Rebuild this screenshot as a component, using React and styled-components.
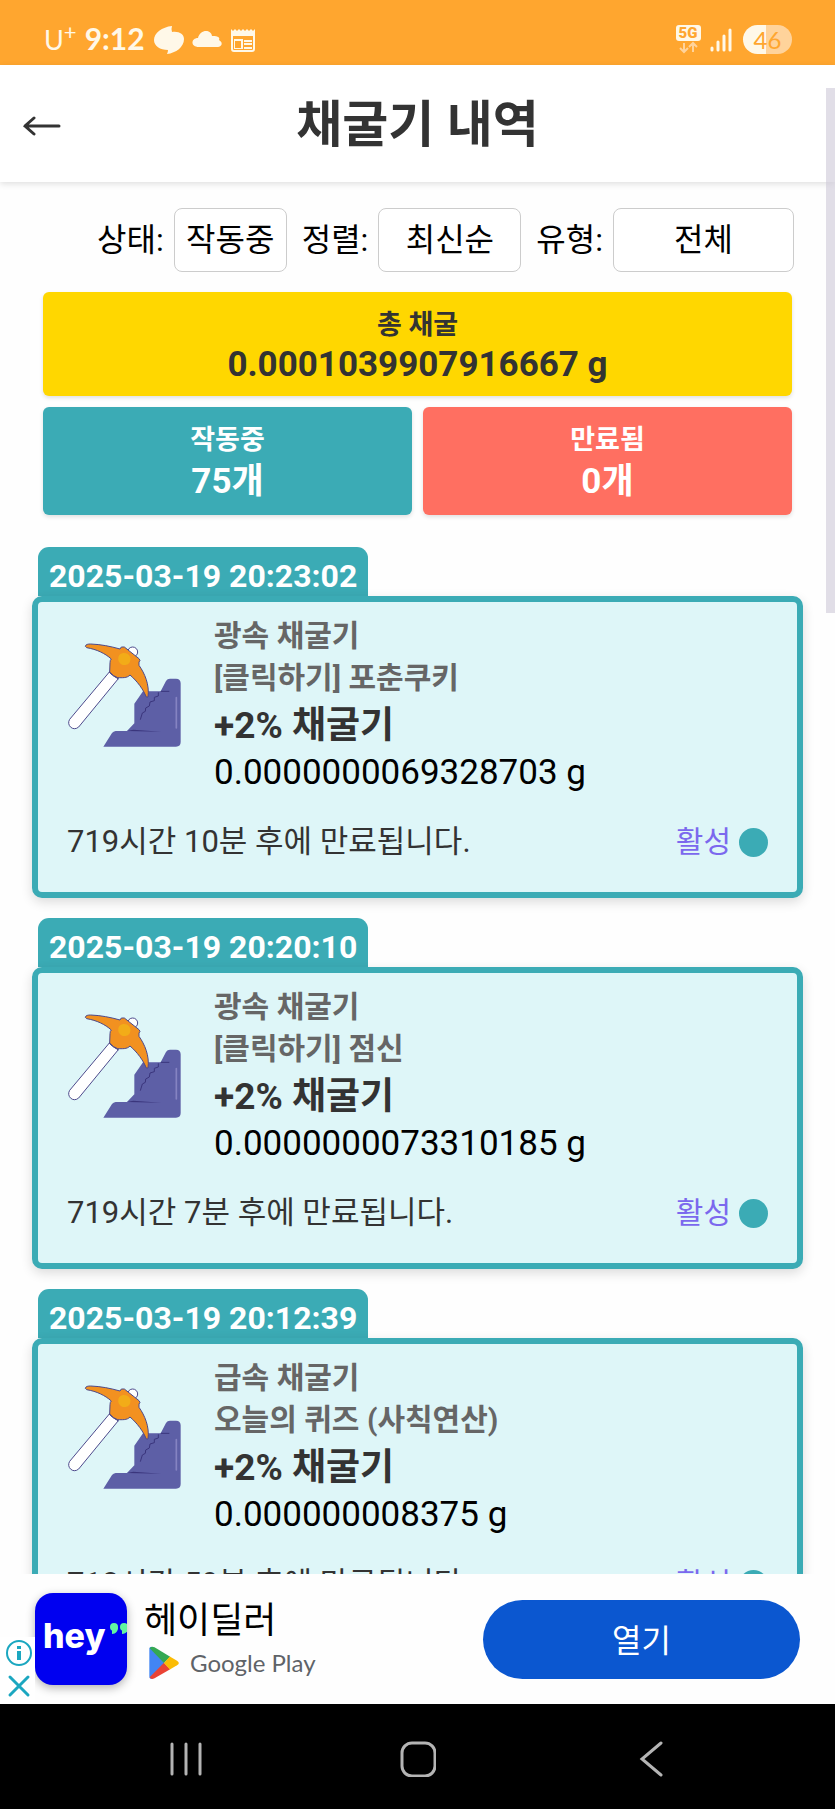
import React, {useState} from 'react';
import styled, {createGlobalStyle} from 'styled-components';

const GlobalStyle = createGlobalStyle`
    * {
        box-sizing: border-box;
    }

    body {
        margin: 0;
        background-color: #fefefe;
        color: #000;
        font-family: Roboto, 'Noto Sans CJK KR', sans-serif;
    }

    button,
    select {
        font-family: inherit;
    }
`;

const StyledScreen = styled.div`
    display: flex;
    flex-direction: column;
    height: 100vh;
`;

const StyledStatusBar = styled.div`
    display: flex;
    flex-shrink: 0;
    justify-content: space-between;
    align-items: center;
    height: 65px;
    padding: 14px 43px 0 44px;
    background-color: #ffa62f;
    color: #fff8e8;
    font-family: Lato, sans-serif;
`;

const StyledStatusGroup = styled.div`
    display: flex;
    align-items: center;
    gap: ${({$gap}) => $gap}px;
`;

const StyledCarrier = styled.span`
    display: flex;
    font-size: 27px;
    line-height: 28px;
`;

const StyledCarrierPlus = styled.sup`
    font-size: 22px;
    line-height: 12px;
`;

const StyledClock = styled.span`
    padding-bottom: 3px;
    font-size: 30px;
    font-weight: 700;
    line-height: 28px;
`;

const StyledBattery = styled.span`
    width: 49px;
    border-radius: 15px;
    background: linear-gradient(to right, #fff8e8 46%, #ffd39b 46%);
    color: #ffa62f;
    font-size: 24px;
    line-height: 29px;
    text-align: center;
`;

const StyledViewport = styled.div`
    position: relative;
    display: flex;
    flex: 1;
    flex-direction: column;
    min-height: 0;
`;

const StyledScrollThumb = styled.div`
    position: absolute;
    top: 23px;
    right: 0;
    z-index: 2;
    width: 9px;
    height: 525px;
    background-color: rgba(205, 200, 215, 0.6);
`;

const StyledHeader = styled.header`
    z-index: 1;
    display: grid;
    flex-shrink: 0;
    grid-template-columns: 40px 1fr 40px;
    align-items: center;
    height: 117px;
    padding: 2px 22px 0;
    background-color: #fff;
    box-shadow: 0 2px 6px rgba(0, 0, 0, 0.12);
`;

const StyledBackButton = styled.button`
    display: flex;
    padding: 2px 0 0;
    border: none;
    background: none;
    cursor: pointer;
`;

const StyledTitle = styled.h1`
    margin: 0;
    color: #333;
    font-size: 50px;
    font-weight: 700;
    line-height: 60px;
    text-align: center;
`;

const StyledMain = styled.main`
    flex: 1;
    min-height: 0;
    overflow-y: auto;
    scrollbar-width: none;
`;

const StyledFilters = styled.div`
    display: flex;
    justify-content: flex-end;
    gap: 15px;
    padding: 26px 41px 20px;
`;

const StyledFilter = styled.div`
    display: flex;
    align-items: center;
    gap: 10px;
    font-size: 32px;
    line-height: 40px;
`;

const StyledSelect = styled.select`
    appearance: none;
    width: ${({$width}) => $width}px;
    height: 64px;
    padding: 0 8px;
    border: 1px solid #ccc;
    border-radius: 8px;
    background-color: #fff;
    color: #000;
    font-size: 32px;
    text-align: center;
    text-align-last: center;
`;

const StyledStats = styled.div`
    display: grid;
    grid-template-columns: 1fr 1fr;
    gap: 11px;
    padding: 0 43px;
`;

const StyledStat = styled.div`
    grid-column: ${({$wide}) => ($wide ? '1 / -1' : 'auto')};
    padding: 14px 12px 10px;
    border-radius: 6px;
    background-color: ${({$background}) => $background};
    box-shadow: 0 2px 4px rgba(0, 0, 0, 0.12);
    color: ${({$color}) => $color};
    font-weight: 700;
    text-align: center;
`;

const StyledStatLabel = styled.div`
    font-size: 27px;
    line-height: 38px;
`;

const StyledStatValue = styled.div`
    font-size: 35px;
    line-height: ${({$lineHeight}) => $lineHeight}px;
`;

const StyledList = styled.ul`
    display: flex;
    flex-direction: column;
    gap: 20px;
    margin: 0;
    padding: 32px 32px 20px;
    list-style: none;
`;

const StyledDate = styled.time`
    display: table;
    height: 49px;
    margin-left: 6px;
    padding: 10px 11px 0;
    border-radius: 11px 11px 0 0;
    background-color: #3babb5;
    color: #fff;
    font-size: 32px;
    font-weight: 700;
    line-height: 39px;
`;

const StyledCard = styled.article`
    padding: 13px 29px 29px;
    border: 6px solid #3babb5;
    border-radius: 10px;
    background-color: #def6f8;
    box-shadow: 0 4px 12px rgba(0, 0, 0, 0.14);
`;

const StyledCardBody = styled.div`
    display: flex;
    align-items: flex-start;
    gap: 30px;
`;

const StyledPickaxe = styled.svg`
    flex-shrink: 0;
    width: 117px;
    height: 110px;
    margin-top: 25px;
`;

const StyledKind = styled.div`
    color: #666;
    font-size: 30px;
    font-weight: 700;
    line-height: 42px;
`;

const StyledBonus = styled.div`
    color: #333;
    font-size: 37px;
    font-weight: 700;
    line-height: 54px;
`;

const StyledAmount = styled.div`
    font-size: 35px;
    line-height: 40px;
`;

const StyledCardFooter = styled.div`
    display: flex;
    justify-content: space-between;
    margin-top: 28px;
    color: #333;
    font-size: 31px;
    line-height: 42px;
`;

const StyledState = styled.span`
    display: flex;
    align-items: center;
    gap: 8px;
    color: #7b68ee;
    font-size: 30px;
`;

const StyledDot = styled.span`
    width: 29px;
    height: 29px;
    border-radius: 50%;
    background-color: #3babb5;
`;

const StyledAd = styled.aside`
    position: relative;
    display: flex;
    flex-shrink: 0;
    align-items: center;
    height: 130px;
    padding: 0 35px;
    background-color: #fefefe;
`;

const StyledAdChoices = styled.div`
    position: absolute;
    bottom: 0;
    left: 0;
    display: flex;
    flex-direction: column;
    align-items: center;
    gap: 8px;
    width: 35px;
    padding: 3px 0 6px 2px;
    background-color: #fff;
`;

const StyledIconButton = styled.button`
    display: flex;
    padding: 0;
    border: none;
    background: none;
    cursor: pointer;
`;

const StyledAdLogo = styled.div`
    display: flex;
    flex-shrink: 0;
    width: 92px;
    height: 92px;
    overflow: hidden;
    border-radius: 18px;
    background-color: #0000f0;
    box-shadow: 0 3px 10px rgba(0, 0, 0, 0.3);
`;

const StyledAdText = styled.div`
    flex: 1;
    padding-left: 17px;
`;

const StyledAdName = styled.div`
    font-size: 36px;
    line-height: 48px;
`;

const StyledStore = styled.div`
    display: flex;
    align-items: center;
    gap: 11px;
    padding-left: 5px;
    color: #5f6368;
    font-family: Lato, sans-serif;
    font-size: 24px;
    line-height: 36px;
`;

const StyledOpenButton = styled.button`
    width: 317px;
    height: 79px;
    padding: 0 0 2px;
    border: none;
    border-radius: 40px;
    background-color: #0b57d0;
    color: #fff;
    font-size: 32px;
    cursor: pointer;
`;

const StyledNavBar = styled.nav`
    display: flex;
    flex-shrink: 0;
    align-items: center;
    height: 105px;
    padding: 4px 68px 0 70px;
    background-color: #000;
`;

const StyledNavButton = styled.button`
    display: flex;
    flex: 1;
    justify-content: center;
    padding: 0;
    border: none;
    background: none;
`;

const filters = [
    {id: 'status', label: '상태:', width: 113, options: ['작동중', '만료됨', '전체']},
    {id: 'sort', label: '정렬:', width: 143, options: ['최신순', '오래된순']},
    {id: 'type', label: '유형:', width: 181, options: ['전체', '광속 채굴기', '급속 채굴기']},
];

const miners = [
    {
        date: '2025-03-19 20:23:02',
        kind: '광속 채굴기',
        source: '[클릭하기] 포춘쿠키',
        amount: '0.0000000069328703 g',
        expires: '719시간 10분 후에 만료됩니다.',
    },
    {
        date: '2025-03-19 20:20:10',
        kind: '광속 채굴기',
        source: '[클릭하기] 점신',
        amount: '0.0000000073310185 g',
        expires: '719시간 7분 후에 만료됩니다.',
    },
    {
        date: '2025-03-19 20:12:39',
        kind: '급속 채굴기',
        source: '오늘의 퀴즈 (사칙연산)',
        amount: '0.000000008375 g',
        expires: '718시간 59분 후에 만료됩니다.',
    },
];

const StatusBar = () => (
    <StyledStatusBar>
        <StyledStatusGroup $gap={8}>
            <StyledCarrier>
                {'U'}
                <StyledCarrierPlus>{'+'}</StyledCarrierPlus>
            </StyledCarrier>
            <StyledClock>{'9:12'}</StyledClock>
            <svg fill={'currentColor'} height={'30'} viewBox={'0 0 105 30'} width={'105'}>
                <path d={'M19 1C9 2 1 8 1 15C1 21 7 25 15 25Q15 27 14 29C23 28 31 22 31 14C31 9 26 6 19 7Q18 4 19 1Z'} />
                <path d={'M46 22C37 22 38 13 45 13C47 4 58 4 59 11C66 11 67 13 66 15C71 18 68 22 65 22Z'} />
                <path
                    d={'M78 5V4L80 6L82 4L84 6L86 4L88 6L90 4L92 6L94 4L96 6L98 4L100 6L102 4V24Q102 27 99 27H81Q78 27 78 24ZM80 11V24Q80 25 81 25H99Q100 25 100 24V11ZM81 14H90V24H81ZM82 16V23H88V16ZM91 15H99V17H91ZM91 18H99V20H91ZM91 22H99V24H91Z'}
                    fillRule={'evenodd'}
                />
            </svg>
        </StyledStatusGroup>
        <StyledStatusGroup $gap={11}>
            <svg height={'29'} viewBox={'0 0 56 29'} width={'56'}>
                <rect fill={'#fff8e8'} height={'16'} rx={'3'} width={'25'} />
                <text
                    fill={'#ffa62f'}
                    fontFamily={'Roboto, sans-serif'}
                    fontSize={'15'}
                    fontWeight={'900'}
                    textAnchor={'middle'}
                    x={'12'}
                    y={'13'}
                >
                    {'5G'}
                </text>
                <path d={'M8 18V27M4 23L8 27L12 23M17 27V18M13 22L17 18L21 22'} fill={'none'} stroke={'#ffd39b'} strokeWidth={'2'} />
                <path d={'M36 23V25M42 17V25M48 11V25M54 5V25'} stroke={'#fff8e8'} strokeLinecap={'round'} strokeWidth={'3'} />
            </svg>
            <StyledBattery>{'46'}</StyledBattery>
        </StyledStatusGroup>
    </StyledStatusBar>
);

const Pickaxe = () => (
    <StyledPickaxe viewBox={'51 30 351 330'}>
        <path
            d={'M160 350L186 309Q190 304 197 303H231L253 280V221L279 184H332L348 153Q352 146 360 146H378Q392 146 392 160V336Q392 350 378 350Z'}
            fill={'#5d5fa6'}
        />
        <path d={'M231 303L250 299L334 305Z'} fill={'#3a357c'} />
        <path
            d={'M332 184H358M325 187V198L313 202V212L300 216L298 228L287 234L286 244L277 249L271 269'}
            fill={'none'}
            stroke={'#3a357c'}
            strokeWidth={'3'}
        />
        <path d={'M379 203V294'} stroke={'#8583c2'} strokeLinecap={'round'} strokeWidth={'5'} />
        <g stroke={'#4d4a8c'} strokeWidth={'3'}>
            <circle cx={'248'} cy={'66'} fill={'#fff'} r={'15'} />
            <path d={'M178 126L59 268C48 285 69 306 86 291L205 146Z'} fill={'#fff'} />
            <path d={'M178 126L205 146L199 143Q187 138 178 126Z'} fill={'#3a357c'} />
            <path
                d={'M106 49C107 43 114 42 122 42C152 43 182 49 210 57L214 51H223L267 86Q273 91 267 96V106C284 130 299 164 294 201H289C279 177 262 154 240 135C231 145 216 143 203 143Q190 139 179 126L180 98Q180 90 184 87C165 70 140 58 110 53Z'}
                fill={'#f29120'}
            />
        </g>
        <ellipse cx={'223'} cy={'87'} fill={'#f2ac18'} rx={'19'} ry={'18'} transform={'rotate(35 223 87)'} />
    </StyledPickaxe>
);

const MinerCard = ({miner}) => (
    <li>
        <StyledDate>{miner.date}</StyledDate>
        <StyledCard>
            <StyledCardBody>
                <Pickaxe />
                <div>
                    <StyledKind>{miner.kind}</StyledKind>
                    <StyledKind>{miner.source}</StyledKind>
                    <StyledBonus>{'+2% 채굴기'}</StyledBonus>
                    <StyledAmount>{miner.amount}</StyledAmount>
                </div>
            </StyledCardBody>
            <StyledCardFooter>
                <span>{miner.expires}</span>
                <StyledState>
                    {'활성'}
                    <StyledDot />
                </StyledState>
            </StyledCardFooter>
        </StyledCard>
    </li>
);

const AdBanner = () => (
    <StyledAd>
        <StyledAdChoices>
            <StyledIconButton aria-label={'광고 정보'} type={'button'}>
                <svg fill={'none'} height={'26'} stroke={'#1ba7c0'} viewBox={'0 0 26 26'} width={'26'}>
                    <circle cx={'13'} cy={'13'} r={'12'} strokeWidth={'2'} />
                    <path d={'M13 11V20M13 6V9'} strokeWidth={'4'} />
                </svg>
            </StyledIconButton>
            <StyledIconButton aria-label={'광고 닫기'} type={'button'}>
                <svg fill={'none'} height={'24'} stroke={'#1ba7c0'} viewBox={'0 0 24 24'} width={'24'}>
                    <path d={'M3 3L21 21M21 3L3 21'} strokeLinecap={'round'} strokeWidth={'3'} />
                </svg>
            </StyledIconButton>
        </StyledAdChoices>
        <StyledAdLogo>
            <svg height={'92'} viewBox={'0 0 92 92'} width={'92'}>
                <text fill={'#fff'} fontFamily={'Inter, sans-serif'} fontSize={'34'} fontWeight={'800'} x={'8'} y={'55'}>
                    {'hey'}
                </text>
                <g fill={'#62f5a0'}>
                    <circle cx={'79'} cy={'34'} r={'4'} />
                    <path d={'M83 34C83 38 81 41 77 41V37Z'} />
                    <circle cx={'89'} cy={'34'} r={'4'} />
                    <path d={'M93 34C93 38 91 41 87 41V37Z'} />
                </g>
            </svg>
        </StyledAdLogo>
        <StyledAdText>
            <StyledAdName>{'헤이딜러'}</StyledAdName>
            <StyledStore>
                <svg height={'34'} viewBox={'0 0 92 102'} width={'30'}>
                    <path d={'M1 10Q0 1 8 1L48 50L8 100Q1 100 1 92Z'} fill={'#4285f4'} />
                    <path d={'M2 6Q7-2 17 3L65 32L46 51Z'} fill={'#34a853'} />
                    <path d={'M2 95Q7 103 17 98L65 70L46 50Z'} fill={'#ea4335'} />
                    <path d={'M64 31L86 44Q97 51 86 58L64 71L46 51Z'} fill={'#fbbc04'} />
                </svg>
                {'Google Play'}
            </StyledStore>
        </StyledAdText>
        <StyledOpenButton type={'button'}>{'열기'}</StyledOpenButton>
    </StyledAd>
);

const NavBar = () => (
    <StyledNavBar>
        <StyledNavButton aria-label={'최근 앱'} type={'button'}>
            <svg height={'36'} stroke={'#b4b4b4'} strokeLinecap={'round'} strokeWidth={'3'} viewBox={'0 0 36 36'} width={'36'}>
                <path d={'M4 3V33M18 3V33M32 3V33'} />
            </svg>
        </StyledNavButton>
        <StyledNavButton aria-label={'홈'} type={'button'}>
            <svg fill={'none'} height={'36'} stroke={'#b4b4b4'} strokeWidth={'3'} viewBox={'0 0 36 36'} width={'36'}>
                <rect height={'33'} rx={'10'} width={'33'} x={'2'} y={'2'} />
            </svg>
        </StyledNavButton>
        <StyledNavButton aria-label={'뒤로'} type={'button'}>
            <svg fill={'none'} height={'36'} stroke={'#b4b4b4'} strokeLinecap={'round'} strokeWidth={'3'} viewBox={'0 0 36 36'} width={'36'}>
                <path d={'M28 2L9 18L28 34'} />
            </svg>
        </StyledNavButton>
    </StyledNavBar>
);

const App = () => {
    const [selected, setSelected] = useState({status: '작동중', sort: '최신순', type: '전체'});

    return (
        <StyledScreen>
            <GlobalStyle />
            <StatusBar />
            <StyledViewport>
                <StyledHeader>
                    <StyledBackButton aria-label={'뒤로 가기'} type={'button'}>
                        <svg fill={'none'} height={'20'} stroke={'#333'} strokeLinecap={'round'} strokeWidth={'3'} viewBox={'0 0 40 20'} width={'40'}>
                            <path d={'M3 10H37M12 2L3 10L12 18'} />
                        </svg>
                    </StyledBackButton>
                    <StyledTitle>{'채굴기 내역'}</StyledTitle>
                </StyledHeader>
                <StyledMain>
                    <StyledFilters>
                        {filters.map((filter) => (
                            <StyledFilter key={filter.id}>
                                <label htmlFor={filter.id}>{filter.label}</label>
                                <StyledSelect
                                    $width={filter.width}
                                    id={filter.id}
                                    onChange={(event) => setSelected({...selected, [filter.id]: event.target.value})}
                                    value={selected[filter.id]}
                                >
                                    {filter.options.map((option) => (
                                        <option key={option}>{option}</option>
                                    ))}
                                </StyledSelect>
                            </StyledFilter>
                        ))}
                    </StyledFilters>
                    <StyledStats>
                        <StyledStat $background={'#ffd700'} $color={'#333'} $wide>
                            <StyledStatLabel>{'총 채굴'}</StyledStatLabel>
                            <StyledStatValue $lineHeight={42}>{'0.0001039907916667 g'}</StyledStatValue>
                        </StyledStat>
                        <StyledStat $background={'#3babb5'} $color={'#fff'}>
                            <StyledStatLabel>{'작동중'}</StyledStatLabel>
                            <StyledStatValue $lineHeight={46}>{'75개'}</StyledStatValue>
                        </StyledStat>
                        <StyledStat $background={'#ff6f61'} $color={'#fff'}>
                            <StyledStatLabel>{'만료됨'}</StyledStatLabel>
                            <StyledStatValue $lineHeight={46}>{'0개'}</StyledStatValue>
                        </StyledStat>
                    </StyledStats>
                    <StyledList>
                        {miners.map((miner) => (
                            <MinerCard key={miner.date} miner={miner} />
                        ))}
                    </StyledList>
                </StyledMain>
                <StyledScrollThumb />
            </StyledViewport>
            <AdBanner />
            <NavBar />
        </StyledScreen>
    );
};

export default App;
